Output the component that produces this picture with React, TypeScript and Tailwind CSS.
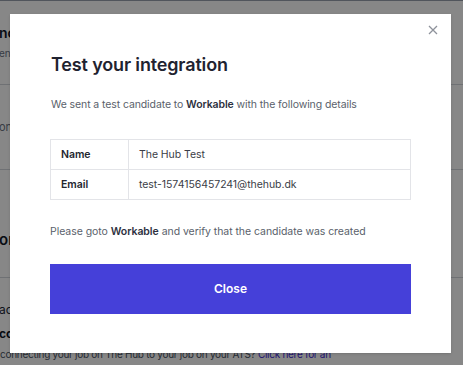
export default function App() {
  return (
    <div className="relative h-[365px] w-[463px] overflow-hidden bg-white font-['Inter',sans-serif]">
      {/* page behind the dialog */}
      <div className="flex flex-col border-t border-gray-400">
        <div className="flex h-[83px] flex-col pt-[19px]">
          <div className="-ml-[1px] text-[14px] font-semibold leading-[26px] text-gray-900">no</div>
          <div className="-ml-[1px] text-[10px] leading-[14px] text-gray-500">enc</div>
        </div>
        <div className="flex h-[85px] items-center border-t border-gray-300">
          <div className="-ml-[1px] text-[11px] text-gray-500">on</div>
        </div>
        <div className="flex h-[108px] items-end border-t border-gray-300 pb-[26px]">
          <div className="-ml-[1px] text-[15px] font-semibold text-gray-900">or</div>
        </div>
        <div className="flex h-[70px] flex-col border-t border-gray-300 pt-[24px]">
          <div className="-ml-[1px] text-[12px] leading-[16px] text-gray-800">ac</div>
          <div className="mt-[8px] -ml-[1px] text-[12px] font-bold leading-[16px] text-gray-900">co</div>
        </div>
        <div className="whitespace-nowrap text-[10px] leading-[14px] tracking-[-0.28px] text-gray-600">
          connecting your job on The Hub to your job on your ATS? <span className="text-indigo-700">Click here for an</span>
        </div>
      </div>

      {/* overlay + dialog */}
      <div className="absolute inset-0 bg-black/[0.47]">
        <div className="absolute left-[10px] top-[14px] flex h-[339px] w-[441px] flex-col bg-white px-10 pt-[38px] shadow-sm">
          <button className="absolute left-[418px] top-[11px] h-[10px] w-[10px] text-[#8e929b]">
            <svg viewBox="0 0 10 10" className="h-[10px] w-[10px]" fill="none" stroke="currentColor" strokeWidth="1.3">
              <path d="M1 1L9 9M9 1L1 9" />
            </svg>
          </button>
          <h2 className="pl-px text-[18px] font-semibold leading-[26px] tracking-[-0.15px] text-[#1f2330]">Test your integration</h2>
          <p className="mt-[19px] pl-px text-[10.5px] leading-[16px] tracking-[-0.1px] text-[#5a5f6b]">
            We sent a test candidate to <span className="font-semibold text-[#2d3140]">Workable</span> with the following details
          </p>
          <table className="mt-[26px] w-full border-collapse text-[10.5px] leading-[16px] tracking-[-0.05px]">
            <tbody>
              <tr className="h-[30px]">
                <td className="w-[78px] border border-[#e3e4e8] pl-[10px] font-semibold text-[#23262f]">Name</td>
                <td className="border border-[#e3e4e8] pl-[10px] text-[#3a3d46]">The Hub Test</td>
              </tr>
              <tr className="h-[30px]">
                <td className="border border-[#e3e4e8] pl-[10px] font-semibold text-[#23262f]">Email</td>
                <td className="border border-[#e3e4e8] pl-[10px] text-[#3a3d46]">test-1574156457241@thehub.dk</td>
              </tr>
            </tbody>
          </table>
          <p className="mt-[24px] text-[10.5px] leading-[16px] tracking-[-0.05px] text-[#5a5f6b]">
            Please goto <span className="font-semibold text-[#2d3140]">Workable</span> and verify that the candidate was created
          </p>
          <button className="mt-[24px] h-[50px] w-full bg-[#4540d9] text-[12px] font-semibold text-white">Close</button>
        </div>
      </div>
    </div>
  );
}
